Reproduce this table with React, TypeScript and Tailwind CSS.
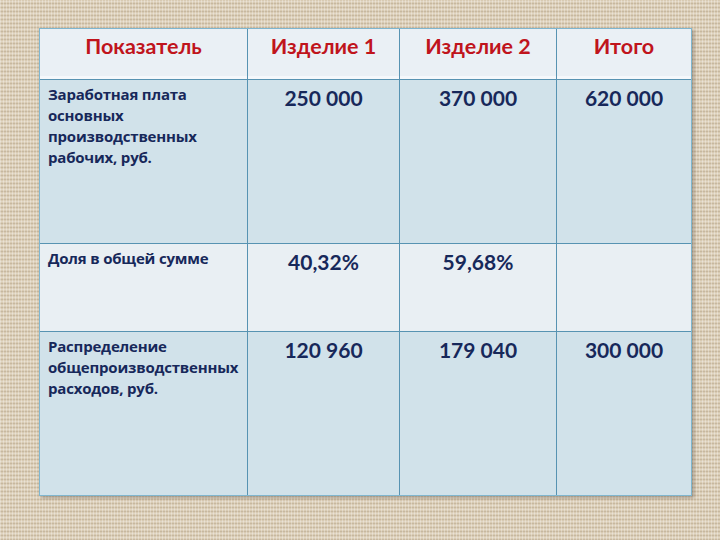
import React from "react";

const head = "text-[#c0141c] text-[21.5px] leading-[26px] font-bold text-center pt-[4px]";
const num = "text-[#17285a] text-[21px] leading-[26px] font-bold text-center pt-[5px]";
const lab = "text-[#17285a] text-[15px] leading-[21px] font-bold pl-[8px] pr-[2px] pt-[4px] font-['Open_Sans',sans-serif] tracking-[-0.2px]";
const line = "border-[#5793b2]";

export default function App() {
  const rows = [
    { label: "Заработная плата основных производственных рабочих, руб.", a: "250 000", b: "370 000", c: "620 000", bg: "bg-[#d1e2ea]" },
    { label: "Доля в общей сумме", a: "40,32%", b: "59,68%", c: "", bg: "bg-[#e9eff3]" },
    { label: "Распределение общепроизводственных расходов, руб.", a: "120 960", b: "179 040", c: "300 000", bg: "bg-[#d1e2ea]" },
  ];
  return (
    <div
      className="w-[720px] h-[540px] pl-[39px] pt-[28px] bg-[#d8cab2] bg-[repeating-linear-gradient(90deg,rgba(255,255,255,0.3)_0_1px,transparent_1px_3px),repeating-linear-gradient(0deg,rgba(110,90,60,0.16)_0_1px,transparent_1px_2px,rgba(255,255,255,0.22)_2px_3px,transparent_3px_4px)]"
      style={{ fontFamily: "Lato, 'Open Sans', sans-serif" }}
    >
      <div className="grid grid-cols-[208px_152px_157px_134px] grid-rows-[51px_164px_88px_163px] w-[653px] border border-[#7fb6cf] shadow-[2px_2px_3px_rgba(60,50,40,0.35)]">
        <div className={`${head} bg-[#eaf0f5] border-r border-b ${line} shadow-[inset_0_-3px_0_#f5f8fb]`}>Показатель</div>
        <div className={`${head} bg-[#eaf0f5] border-r border-b ${line} shadow-[inset_0_-3px_0_#f5f8fb]`}>Изделие 1</div>
        <div className={`${head} bg-[#eaf0f5] border-r border-b ${line} shadow-[inset_0_-3px_0_#f5f8fb]`}>Изделие 2</div>
        <div className={`${head} bg-[#eaf0f5] border-b ${line} shadow-[inset_0_-3px_0_#f5f8fb]`}>Итого</div>
        {rows.map((r, i) => {
          const bb = i < rows.length - 1 ? "border-b" : "";
          return (
            <React.Fragment key={i}>
              <div className={`${lab} ${r.bg} border-r ${bb} ${line}`}>{r.label}</div>
              <div className={`${num} ${r.bg} border-r ${bb} ${line}`}>{r.a}</div>
              <div className={`${num} ${r.bg} border-r ${bb} ${line}`}>{r.b}</div>
              <div className={`${num} ${r.bg} ${bb} ${line}`}>{r.c}</div>
            </React.Fragment>
          );
        })}
      </div>
    </div>
  );
}
